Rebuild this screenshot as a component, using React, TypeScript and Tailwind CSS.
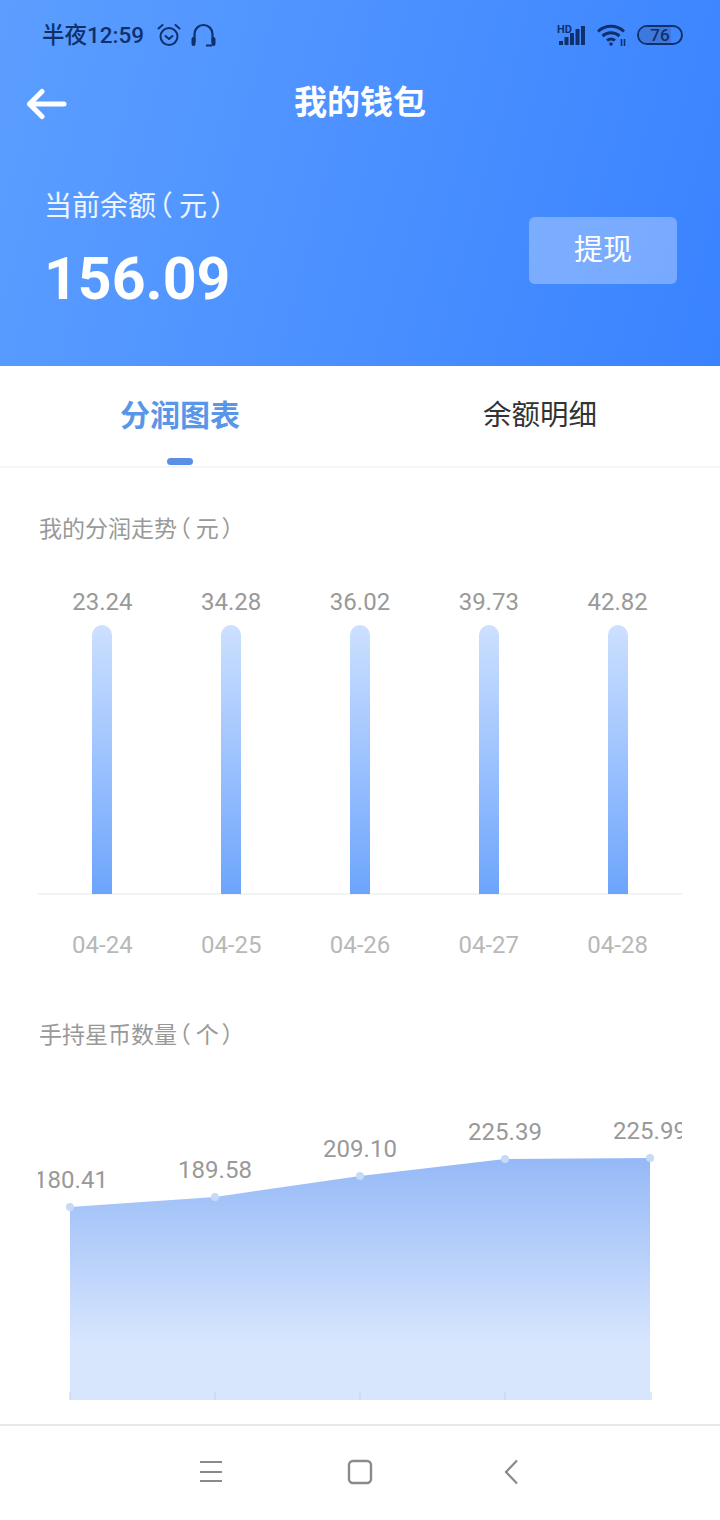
const bars = [
  { value: '23.24', date: '04-24' },
  { value: '34.28', date: '04-25' },
  { value: '36.02', date: '04-26' },
  { value: '39.73', date: '04-27' },
  { value: '42.82', date: '04-28' },
];

// chart coordinates are relative to the svg box (x 38, y 1100 in the page)
const points = [
  { x: 32, y: 107, label: '180.41', lx: 33, ly: 80 },
  { x: 177, y: 97, label: '189.58', lx: 177, ly: 70 },
  { x: 322, y: 76, label: '209.10', lx: 322, ly: 49 },
  { x: 467, y: 59, label: '225.39', lx: 467, ly: 32 },
  { x: 612, y: 58, label: '225.99', lx: 612, ly: 31 },
];

// half-width parens (halt) with the gaps of the original font round the unit
function Unit({ children }: { children: string }) {
  return (
    <span className="[font-feature-settings:'halt']">
      <span className="ml-[0.1em]">（</span>
      <span className="ml-[0.22em]">{children}</span>
      <span className="ml-[0.12em]">）</span>
    </span>
  );
}

function StatusBar() {
  return (
    <div className="flex h-[70px] items-center justify-between pl-[42px] pr-[37px] text-[#10306b]">
      <div className="flex items-center">
        <span className="text-[22.5px] font-medium leading-none">半夜12:59</span>
        <svg className="ml-[13px]" width="24" height="24" viewBox="0 0 24 24" fill="none" stroke="currentColor" strokeWidth="2">
          <circle cx="12" cy="13.5" r="8.5" />
          <path d="M8.5 13l3.5 3 3.5-3" strokeLinecap="round" strokeLinejoin="round" />
          <path d="M1.5 5.5L5.5 2M22.5 5.5L18.5 2" strokeLinecap="round" />
        </svg>
        <svg className="ml-[10px]" width="25" height="24" viewBox="0 0 25 24" fill="none" stroke="currentColor">
          <path d="M3.5 19V11a9 9 0 0 1 18 0v8" strokeWidth="2.2" />
          <path d="M2.5 16v5M22.5 16v5" strokeWidth="4" strokeLinecap="round" />
          <path d="M15 22.5h6" strokeWidth="2" />
        </svg>
      </div>
      <div className="flex items-center">
        <svg width="30" height="22" viewBox="0 0 30 22" fill="currentColor">
          <text x="0" y="9" fontSize="11" fontWeight="700" fontFamily="Roboto, sans-serif">HD</text>
          <rect x="2" y="17" width="4" height="4" />
          <rect x="7.5" y="13" width="4" height="8" />
          <rect x="13" y="9" width="4" height="12" />
          <rect x="18.5" y="5" width="4" height="16" />
          <rect x="24" y="2" width="4" height="19" />
        </svg>
        <svg className="ml-[10px]" width="30" height="22" viewBox="0 0 30 22" fill="none" stroke="currentColor" strokeWidth="3">
          <path d="M1 7.5a19 19 0 0 1 26 0" />
          <path d="M5.5 12a13 13 0 0 1 17 0" />
          <path d="M10 16.5a6.5 6.5 0 0 1 8 0" />
          <circle cx="14" cy="20" r="1.8" fill="currentColor" stroke="none" />
          <path d="M24.5 15v7M27.5 15v7" strokeWidth="1.6" />
        </svg>
        <div className="relative ml-[10px] flex h-[20px] w-[46px] items-center justify-center overflow-hidden rounded-full border-2 border-[#10306b] text-[17px] font-medium leading-none">
          <span className="absolute inset-y-0 left-0 w-[76%] bg-[#3f78dc]" />
          <span className="relative">76</span>
        </div>
      </div>
    </div>
  );
}

function BarChart() {
  return (
    <div className="mx-[38px] w-[644px]">
      <div className="grid grid-cols-5 border-b-2 border-[#f2f3f5]">
        {bars.map((b) => (
          <div key={b.date} className="flex flex-col items-center">
            <span className="text-[24px] leading-[28px] text-[#999999]">{b.value}</span>
            <div className="relative mt-[9px] mb-[-1px] h-[269px] w-[20px] rounded-t-full bg-gradient-to-b from-[#cde0ff] to-[#6ca4fb]" />
          </div>
        ))}
      </div>
      <div className="mt-[36px] grid grid-cols-5">
        {bars.map((b) => (
          <span key={b.date} className="text-center text-[24px] leading-[28px] text-[#b8b8b8]">
            {b.date}
          </span>
        ))}
      </div>
    </div>
  );
}

function AreaChart() {
  const line = points.map((p) => `${p.x},${p.y}`).join(' ');
  return (
    <svg className="ml-[38px] mt-[50px] block" width="644" height="310" viewBox="0 0 644 310">
      <defs>
        <linearGradient id="area" x1="0" y1="58" x2="0" y2="300" gradientUnits="userSpaceOnUse">
          <stop offset="0" stopColor="#95b9f7" />
          <stop offset="0.78" stopColor="#d8e6fd" />
          <stop offset="1" stopColor="#d8e6fd" />
        </linearGradient>
      </defs>
      <polygon points={`32,300 ${line} 612,300`} fill="url(#area)" />
      {points.map((p) => (
        <path key={p.x} d={`M${p.x + (p.x === 612 ? 1 : 0)} 292v8`} stroke="#c3d2e4" strokeWidth="1" />
      ))}
      {points.map((p) => (
        <circle key={p.label} cx={p.x} cy={p.y} r="4" fill="#c5daf9" />
      ))}
      {points.map((p) => (
        <text key={p.label} x={p.lx} y={p.ly + 8} textAnchor="middle" fontSize="24" fill="#999999">
          {p.label}
        </text>
      ))}
    </svg>
  );
}

export default function App() {
  return (
    <div className="flex h-[1520px] w-[720px] flex-col overflow-hidden bg-white font-['Roboto','Noto_Sans_CJK_SC',sans-serif]">
      <header className="h-[366px] bg-[linear-gradient(105deg,#5c9eff,#3a83ff)]">
        <StatusBar />
        <div className="relative flex h-[64px] items-center justify-center">
          <svg className="absolute left-[26px] top-[18px] text-white" width="41" height="32" viewBox="0 0 41 32" fill="none" stroke="currentColor" strokeWidth="5" strokeLinecap="round" strokeLinejoin="round">
            <path d="M38 16H4" />
            <path d="M16 3.5L3.5 16 16 28.5" />
          </svg>
          <h1 className="text-[33px] font-bold leading-none text-white">我的钱包</h1>
        </div>
        <div className="mt-[57px] flex items-start justify-between pl-[44px] pr-[43px]">
          <div>
            <p className="text-[28px] leading-[32px] text-white/90">
              当前余额<Unit>元</Unit>
            </p>
            <p className="mt-[25px] text-[59px] font-bold leading-[62px] text-white">156.09</p>
          </div>
          <button className="mt-[26px] h-[67px] w-[148px] rounded-[6px] bg-white/30 text-[29px] text-white">提现</button>
        </div>
      </header>

      <nav className="grid h-[102px] grid-cols-2 border-b-2 border-[#f6f6f6]">
        <div className="relative flex h-[98px] items-center justify-center">
          <span className="text-[30px] font-bold text-[#5a96e8]">分润图表</span>
          <span className="absolute bottom-[-1px] left-[167px] h-[7px] w-[26px] rounded-full bg-[#5b8fe6]" />
        </div>
        <div className="flex h-[98px] items-center justify-center">
          <span className="mt-[2px] text-[28.5px] text-[#333333]">余额明细</span>
        </div>
      </nav>

      <h2 className="ml-[39px] mt-[48px] text-[23px] leading-[28px] text-[#999999]">
        我的分润走势<Unit>元</Unit>
      </h2>
      <div className="mt-[44px]">
        <BarChart />
      </div>
      <h2 className="ml-[39px] mt-[63px] text-[23px] leading-[28px] text-[#999999]">
        手持星币数量<Unit>个</Unit>
      </h2>
      <AreaChart />

      <footer className="mt-auto flex h-[96px] items-center border-t-2 border-[#e8e8e8] pb-[2px] text-[#8a8a8a]">
        <svg className="ml-[199px]" width="24" height="26" viewBox="0 0 24 26" fill="none" stroke="currentColor" strokeWidth="2">
          <path d="M1 3h22M1 13h22M1 22h22" />
        </svg>
        <svg className="ml-[124px]" width="26" height="26" viewBox="0 0 26 26" fill="none" stroke="currentColor" strokeWidth="2.4">
          <rect x="2" y="2" width="22" height="22" rx="4" />
        </svg>
        <svg className="ml-[130px]" width="18" height="26" viewBox="0 0 18 26" fill="none" stroke="currentColor" strokeWidth="2.2">
          <path d="M14 1.5L3 13l11 11.5" />
        </svg>
      </footer>
    </div>
  );
}
